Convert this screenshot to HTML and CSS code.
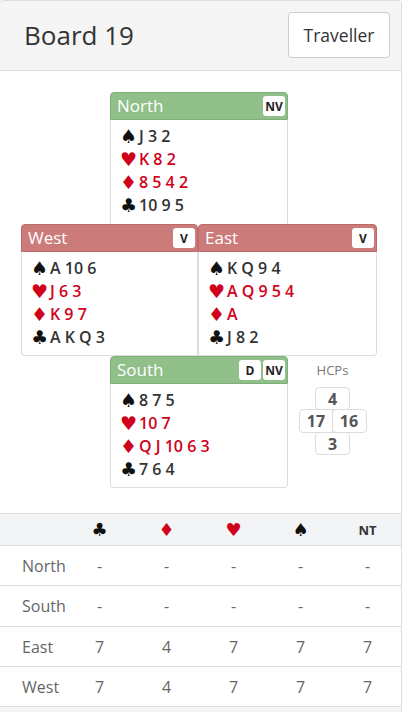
FILE: index.html
```html
<!DOCTYPE html>
<html>
<head>
<meta charset="utf-8">
<link rel="stylesheet" href="styles.css">
</head>
<body>
<div class="card">
  <div class="card-head">
    <h1 class="title">Board 19</h1>
    <button class="btn">Traveller</button>
  </div>
  <div class="deal">
    <div class="hand north">
      <div class="hand-head ns"><span class="dir">North</span><span class="badges"><span class="badge">NV</span></span></div>
      <div class="hand-body">
        <div class="line"><span class="suit">♠</span>J 3 2</div>
        <div class="line red"><span class="suit">♥</span>K 8 2</div>
        <div class="line red"><span class="suit">♦</span>8 5 4 2</div>
        <div class="line"><span class="suit">♣</span>10 9 5</div>
      </div>
    </div>
    <div class="hand west">
      <div class="hand-head ew"><span class="dir">West</span><span class="badges"><span class="badge">V</span></span></div>
      <div class="hand-body bl">
        <div class="line"><span class="suit">♠</span>A 10 6</div>
        <div class="line red"><span class="suit">♥</span>J 6 3</div>
        <div class="line red"><span class="suit">♦</span>K 9 7</div>
        <div class="line"><span class="suit">♣</span>A K Q 3</div>
      </div>
    </div>
    <div class="hand east">
      <div class="hand-head ew"><span class="dir">East</span><span class="badges"><span class="badge">V</span></span></div>
      <div class="hand-body br">
        <div class="line"><span class="suit">♠</span>K Q 9 4</div>
        <div class="line red"><span class="suit">♥</span>A Q 9 5 4</div>
        <div class="line red"><span class="suit">♦</span>A</div>
        <div class="line"><span class="suit">♣</span>J 8 2</div>
      </div>
    </div>
    <div class="hand south">
      <div class="hand-head ns"><span class="dir">South</span><span class="badges"><span class="badge">D</span><span class="badge">NV</span></span></div>
      <div class="hand-body bl br">
        <div class="line"><span class="suit">♠</span>8 7 5</div>
        <div class="line red"><span class="suit">♥</span>10 7</div>
        <div class="line red"><span class="suit">♦</span>Q J 10 6 3</div>
        <div class="line"><span class="suit">♣</span>7 6 4</div>
      </div>
    </div>
    <div class="hcps">
      <div class="hcp-label">HCPs</div>
      <div class="hcp-grid">
        <div class="hcp n">4</div>
        <div class="hcp w">17</div>
        <div class="hcp e">16</div>
        <div class="hcp s">3</div>
      </div>
    </div>
  </div>
  <table class="tricks">
    <thead>
      <tr><th></th><th class="s-blk">♣</th><th class="s-red">♦</th><th class="s-red">♥</th><th class="s-blk">♠</th><th class="nt">NT</th></tr>
    </thead>
    <tbody>
      <tr><td class="lbl">North</td><td>-</td><td>-</td><td>-</td><td>-</td><td>-</td></tr>
      <tr class="tall"><td class="lbl">South</td><td>-</td><td>-</td><td>-</td><td>-</td><td>-</td></tr>
      <tr><td class="lbl">East</td><td>7</td><td>4</td><td>7</td><td>7</td><td>7</td></tr>
      <tr><td class="lbl">West</td><td>7</td><td>4</td><td>7</td><td>7</td><td>7</td></tr>
    </tbody>
  </table>
  <div class="card-foot"></div>
</div>
</body>
</html>
```

FILE: styles.css
```css
* { box-sizing: border-box; }
html, body { margin: 0; padding: 0; background: #fff; }
body {
  font-family: "Open Sans", "Liberation Sans", sans-serif;
  color: #333;
  overflow: hidden;
}
.card {
  width: 403px;
  margin-left: -1px;
  border: 1px solid #ddd;
  border-radius: 4px 4px 0 0;
  background: #fff;
}
.card-head {
  height: 70px;
  background: #f5f5f5;
  border-bottom: 1px solid #ddd;
  border-radius: 4px 4px 0 0;
  display: flex;
  align-items: center;
  justify-content: space-between;
  padding: 0 11px 2px 24px;
}
.title {
  margin: 0;
  font-size: 26px;
  font-weight: 400;
  color: #333;
}
.btn {
  font-family: "Open Sans", "Liberation Sans", sans-serif;
  font-size: 17.5px;
  color: #333;
  background: #fff;
  border: 1px solid #ccc;
  border-radius: 4px;
  width: 102px;
  height: 46px;
  padding: 0;
}
.deal {
  display: grid;
  grid-template-columns: 89px 88px 90px 89px;
  padding: 21px 0 25px 21px;
}
.north { grid-column: 2 / 4; grid-row: 1; }
.west { grid-column: 1 / 3; grid-row: 2; }
.east { grid-column: 3 / 5; grid-row: 2; }
.south { grid-column: 2 / 4; grid-row: 3; }
.hcps { grid-column: 4 / 5; grid-row: 3; display: flex; flex-direction: column; align-items: center; padding-top: 5px; }
.hand-head {
  height: 28px;
  display: flex;
  align-items: center;
  justify-content: space-between;
  padding: 0 2px 0 6px;
  border-radius: 4px 4px 0 0;
  color: #fff;
}
.hand-head.ns { background: #90bf8a; border: 1px solid #80b07a; }
.hand-head.ew { background: #cc7b7b; border: 1px solid #bd6a6a; }
.dir { font-size: 17px; line-height: 26px; }
.badges { display: flex; gap: 2px; }
.badge {
  background: #fff;
  color: #222;
  font-weight: 700;
  font-size: 12px;
  height: 20px;
  min-width: 22px;
  padding: 0 2px;
  border-radius: 3px;
  display: flex;
  align-items: center;
  justify-content: center;
}
.hand-body {
  border: 1px solid #ddd;
  border-top: none;
  padding: 5px 9px 6px;
  height: 104px;
  background: #fff;
}
.hand-body.bl { border-bottom-left-radius: 4px; }
.hand-body.br { border-bottom-right-radius: 4px; }
.north .hand-body { border-bottom: none; }
.line {
  font-size: 16px;
  font-weight: 600;
  line-height: 23px;
  color: #333;
  white-space: nowrap;
}
.line.red { color: #d0021b; }
.suit {
  display: inline-block;
  width: 19px;
  font-family: "DejaVu Sans", sans-serif;
  font-size: 19px;
  line-height: 20px;
  font-weight: 400;
  vertical-align: -1px;
}
.line .suit { color: #111; }
.line.red .suit { color: #d0021b; }
.hcp-label { font-size: 13px; color: #777; margin-bottom: 8px; }
.hcp-grid {
  display: grid;
  grid-template-columns: 34px 34px;
}
.hcp {
  height: 23px;
  width: 35px;
  border: 1px solid #ddd;
  border-radius: 4px;
  font-weight: 700;
  font-size: 16px;
  color: #555;
  display: flex;
  align-items: center;
  justify-content: center;
  background: #fff;
}
.hcp.n, .hcp.s { grid-column: 1 / 3; justify-self: center; }
.hcp.w, .hcp.e { margin: -1px 0; height: 24px; }
.hcp.e { margin-left: -1px; }
.tricks {
  width: 401px;
  border-collapse: collapse;
  table-layout: fixed;
}
.tricks th, .tricks td { padding: 0; text-align: center; }
.tricks th:first-child, .tricks td:first-child { width: 66px; }
.tricks thead tr { background: #f3f4f6; border-top: 1px solid #ddd; border-bottom: 1px solid #ddd; height: 32px; }
.tricks th { font-family: "DejaVu Sans", sans-serif; font-size: 18px; font-weight: 400; }
.s-blk { color: #111; }
.s-red { color: #d0021b; }
.tricks th.nt { font-family: "Open Sans", sans-serif; font-size: 13px; font-weight: 700; color: #333; }
.tricks tbody tr { height: 40px; border-bottom: 1px solid #ddd; }
.tricks tbody tr.tall { height: 41px; }
.tricks td { font-size: 16px; color: #666; }
.tricks td.lbl { text-align: left; padding-left: 22px; }
.card-foot { height: 10px; background: #f5f5f5; }
```
